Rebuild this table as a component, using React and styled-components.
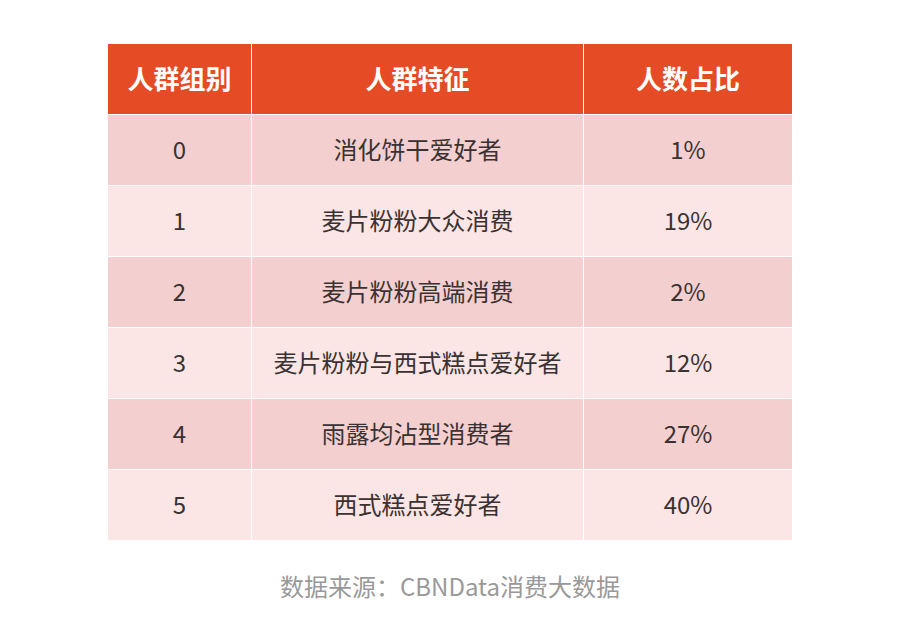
import React from "react";
import styled, { createGlobalStyle } from "styled-components";

const GlobalStyle = createGlobalStyle`
  html, body {
    margin: 0;
    padding: 0;
    background: #ffffff;
  }
  body {
    font-family: "Noto Sans CJK SC", sans-serif;
  }
`;

const Page = styled.div`
  width: 900px;
  height: 636px;
  padding-top: 44px;
  box-sizing: border-box;
  display: flex;
  flex-direction: column;
  align-items: center;
`;

const Table = styled.div`
  width: 684px;
  display: grid;
  grid-template-columns: 143px 331px 208px;
  grid-auto-rows: 70px;
  gap: 1px;
  background: #ffffff;
`;

const HeadCell = styled.div`
  background: #e54b24;
  color: #ffffff;
  font-family: "Noto Sans CJK SC", sans-serif;
  font-weight: 700;
  font-size: 26px;
  padding-bottom: 4px;
  box-sizing: border-box;
  display: flex;
  align-items: center;
  justify-content: center;
`;

const Cell = styled.div`
  background: ${(props) => (props.odd ? "#fbe5e5" : "#f4cfcf")};
  color: #3a3232;
  font-family: "Noto Sans CJK SC", sans-serif;
  font-weight: 400;
  font-size: 24px;
  padding-bottom: 4px;
  box-sizing: border-box;
  display: flex;
  align-items: center;
  justify-content: center;
`;

const Source = styled.div`
  margin-top: 28px;
  color: #999999;
  font-family: "Noto Sans CJK SC", sans-serif;
  font-size: 24px;
  line-height: 36px;
`;

const rows = [
  ["0", "消化饼干爱好者", "1%"],
  ["1", "麦片粉粉大众消费", "19%"],
  ["2", "麦片粉粉高端消费", "2%"],
  ["3", "麦片粉粉与西式糕点爱好者", "12%"],
  ["4", "雨露均沾型消费者", "27%"],
  ["5", "西式糕点爱好者", "40%"],
];

const App = () => (
  <Page>
    <GlobalStyle />
    <Table>
      <HeadCell>人群组别</HeadCell>
      <HeadCell>人群特征</HeadCell>
      <HeadCell>人数占比</HeadCell>
      {rows.map((row, index) =>
        row.map((text, col) => (
          <Cell key={`${index}-${col}`} odd={index % 2 === 1}>
            {text}
          </Cell>
        ))
      )}
    </Table>
    <Source>数据来源：CBNData消费大数据</Source>
  </Page>
);

export default App;
